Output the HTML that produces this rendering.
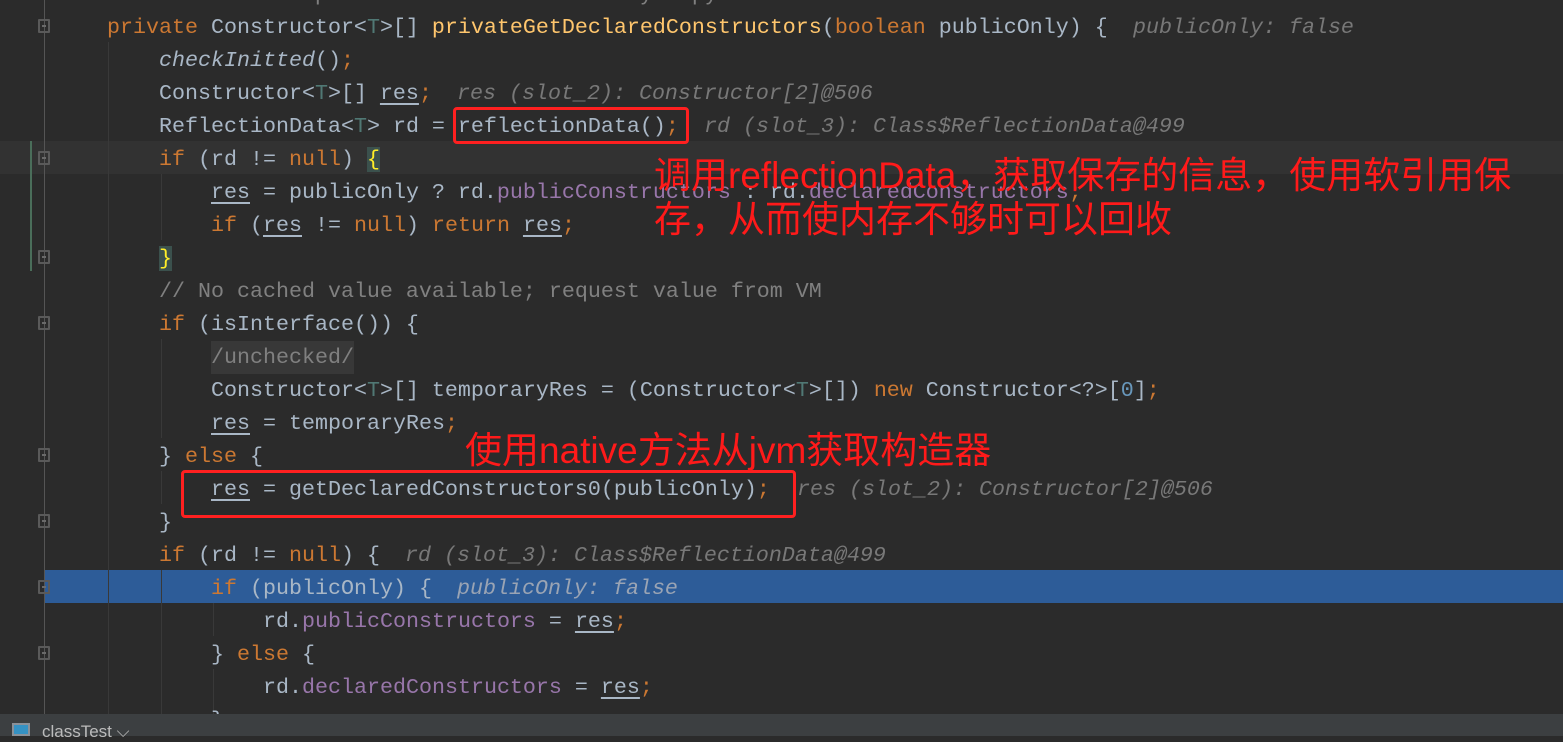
<!DOCTYPE html>
<html><head><meta charset="utf-8"><style>
body{margin:0;width:1563px;height:736px;overflow:hidden;background:#2b2b2b;position:relative;font-family:"Liberation Mono",monospace;}
.l{position:absolute;left:0;height:33px;line-height:33px;font-size:21.67px;color:#a9b7c6;white-space:pre;margin-top:2px}
.k{color:#cc7832}.t{color:#507874}.f{color:#9876aa}.c{color:#808080}.m{color:#ffc66d}.n{color:#6897bb}
.i{font-style:italic}.u{text-decoration:underline;text-underline-offset:4px}
.h{position:absolute;height:33px;line-height:33px;font-size:21.67px;color:#787878;font-style:italic;white-space:pre;margin-top:2px}
.g{position:absolute;width:1px;background:#393939}
.fold{position:absolute;left:38px;width:12px;height:14px;border:2px solid #5a5a5a;box-sizing:border-box;border-radius:1px}
.fold:after{content:"";position:absolute;left:2px;top:4px;width:4px;height:2px;background:#6a6a6a}
.box{position:absolute;border:3px solid #ff2020;border-radius:4px;box-sizing:border-box}
.ann{position:absolute;color:#ff1a1a;font-family:"Liberation Sans","Noto Sans CJK SC",sans-serif;font-size:37px;line-height:37px;white-space:nowrap}
</style></head><body>
<div style="position:absolute;left:0;top:141px;width:1563px;height:33px;background:#323232"></div>
<div style="position:absolute;left:45px;top:570px;width:1518px;height:33px;background:#2d5c98"></div>
<div style="position:absolute;left:44px;top:0;width:1px;height:714px;background:#555"></div>
<div style="position:absolute;left:30px;top:141px;width:2px;height:130px;background:#4a6e5a"></div>
<div class="g" style="left:108px;top:42px;height:672px"></div>
<div class="g" style="left:161px;top:174px;height:66px"></div>
<div class="g" style="left:161px;top:339px;height:99px"></div>
<div class="g" style="left:161px;top:471px;height:33px"></div>
<div class="g" style="left:161px;top:570px;height:144px"></div>
<div class="g" style="left:213px;top:603px;height:33px"></div>
<div class="g" style="left:213px;top:669px;height:45px"></div>
<div class="fold" style="top:19px"></div>
<div class="fold" style="top:151px"></div>
<div class="fold" style="top:250px"></div>
<div class="fold" style="top:316px"></div>
<div class="fold" style="top:448px"></div>
<div class="fold" style="top:514px"></div>
<div class="fold" style="top:580px"></div>
<div class="fold" style="top:646px"></div>

<div class="l c" style="top:-24px;left:107px">// Instead be copied via ReflectionFactory.copyConstructor.</div>
<div class="l" style="top:9px;left:107px"><span class="k">private</span> Constructor&lt;<span class="t">T</span>&gt;[] <span class="m">privateGetDeclaredConstructors</span>(<span class="k">boolean</span> publicOnly) {</div>
<div class="h" style="top:9px;left:1133px">publicOnly: false</div>
<div class="l" style="top:42px;left:159px"><span class="i">checkInitted</span>()<span class="k">;</span></div>
<div class="l" style="top:75px;left:159px">Constructor&lt;<span class="t">T</span>&gt;[] <span class="u">res</span><span class="k">;</span></div>
<div class="h" style="top:75px;left:457px">res (slot_2): Constructor[2]@506</div>
<div class="l" style="top:108px;left:159px">ReflectionData&lt;<span class="t">T</span>&gt; rd = reflectionData()<span class="k">;</span></div>
<div class="h" style="top:108px;left:704px">rd (slot_3): Class$ReflectionData@499</div>
<div class="l" style="top:141px;left:159px"><span class="k">if</span> (rd != <span class="k">null</span>) <span style="color:#ffef28;background:#3b514d">{</span></div>
<div class="l" style="top:174px;left:211px"><span class="u">res</span> = publicOnly ? rd.<span class="f">publicConstructors</span> : rd.<span class="f">declaredConstructors</span><span class="k">;</span></div>
<div class="l" style="top:207px;left:211px"><span class="k">if</span> (<span class="u">res</span> != <span class="k">null</span>) <span class="k">return</span> <span class="u">res</span><span class="k">;</span></div>
<div class="l" style="top:240px;left:159px"><span style="color:#ffef28;background:#3b514d">}</span></div>
<div class="l c" style="top:273px;left:159px">// No cached value available; request value from VM</div>
<div class="l" style="top:306px;left:159px"><span class="k">if</span> (isInterface()) {</div>
<div class="l c" style="top:339px;left:211px;background:#383838">/unchecked/</div>
<div class="l" style="top:372px;left:211px">Constructor&lt;<span class="t">T</span>&gt;[] temporaryRes = (Constructor&lt;<span class="t">T</span>&gt;[]) <span class="k">new</span> Constructor&lt;?&gt;[<span class="n">0</span>]<span class="k">;</span></div>
<div class="l" style="top:405px;left:211px"><span class="u">res</span> = temporaryRes<span class="k">;</span></div>
<div class="l" style="top:438px;left:159px">} <span class="k">else</span> {</div>
<div class="l" style="top:471px;left:211px"><span class="u">res</span> = getDeclaredConstructors0(publicOnly)<span class="k">;</span></div>
<div class="h" style="top:471px;left:797px">res (slot_2): Constructor[2]@506</div>
<div class="l" style="top:504px;left:159px">}</div>
<div class="l" style="top:537px;left:159px"><span class="k">if</span> (rd != <span class="k">null</span>) {</div>
<div class="h" style="top:537px;left:405px">rd (slot_3): Class$ReflectionData@499</div>
<div class="l" style="top:570px;left:211px"><span class="k">if</span> (publicOnly) {</div>
<div class="h" style="top:570px;left:457px;color:#9aa4b4">publicOnly: false</div>
<div class="l" style="top:603px;left:263px">rd.<span class="f">publicConstructors</span> = <span class="u">res</span><span class="k">;</span></div>
<div class="l" style="top:636px;left:211px">} <span class="k">else</span> {</div>
<div class="l" style="top:669px;left:263px">rd.<span class="f">declaredConstructors</span> = <span class="u">res</span><span class="k">;</span></div>
<div class="l" style="top:702px;left:211px">}</div>

<div class="box" style="left:453px;top:107px;width:236px;height:37px"></div>
<div class="box" style="left:181px;top:470px;width:615px;height:48px"></div>
<div class="ann" style="left:654px;top:157px">调用reflectionData，获取保存的信息，使用软引用保</div>
<div class="ann" style="left:654px;top:201px">存，从而使内存不够时可以回收</div>
<div class="ann" style="left:465px;top:432px">使用native方法从jvm获取构造器</div>

<div style="position:absolute;left:0;top:714px;width:1563px;height:22px;background:#3c3f41"></div>
<div style="position:absolute;left:12px;top:723px;width:18px;height:13px;border:2px solid #8a9199;box-sizing:border-box;background:#3592c4"></div>
<div style="position:absolute;left:42px;top:722px;font-family:'Liberation Sans',sans-serif;font-size:17px;color:#bbb">classTest ⌵</div>
</body></html>
